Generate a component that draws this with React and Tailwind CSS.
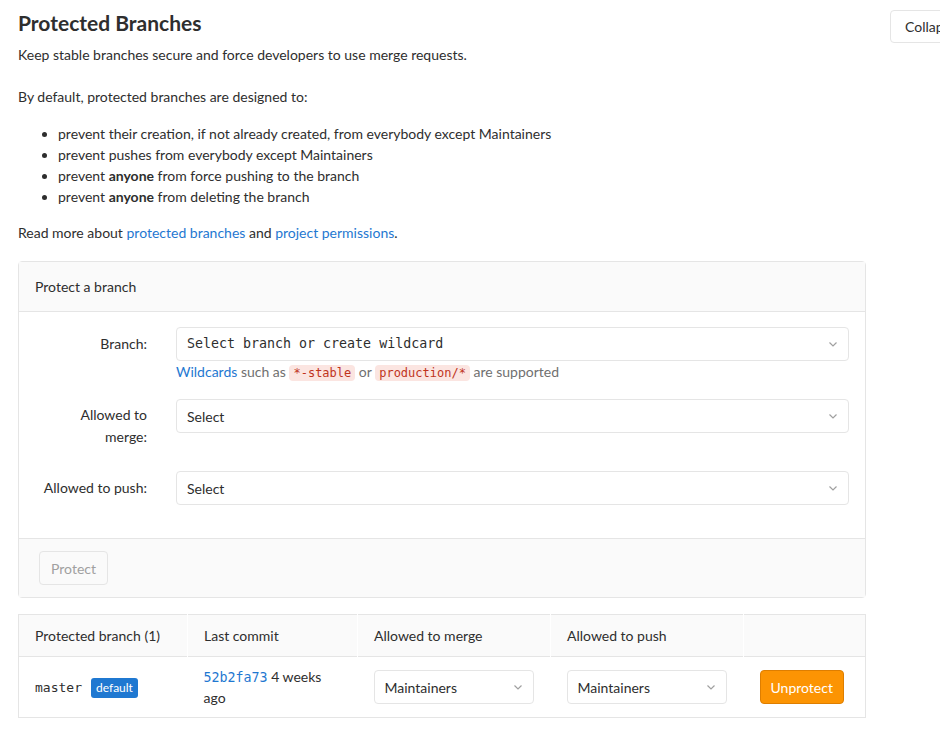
import React from 'react';

const sans = { fontFamily: 'Lato, "Noto Sans", sans-serif' };

function Chevron({ className = '' }) {
  return (
    <svg width="10" height="10" viewBox="0 0 10 10" className={className}>
      <path d="M1.5 3.5 L5 7 L8.5 3.5" fill="none" stroke="#a0a0a0" strokeWidth="1.2" />
    </svg>
  );
}

function SelectBox({ children, mono, className = '' }) {
  return (
    <div className={`flex items-center justify-between h-[34px] border border-[#e5e5e5] rounded bg-white pl-[10px] pr-[10px] ${className}`}>
      <span className={mono ? "font-['DejaVu_Sans_Mono',monospace] text-[13.3px] text-[#2e2e2e]" : 'text-[14px] text-[#2e2e2e]'}>{children}</span>
      <Chevron />
    </div>
  );
}

function Code({ children }) {
  return (
    <code className="font-['DejaVu_Sans_Mono',monospace] text-[12px] bg-[#fbe5e1] text-[#c0341d] rounded px-[4px] py-[1px]">{children}</code>
  );
}

export default function App() {
  return (
    <div className="relative bg-white text-[#2e2e2e] text-[14px] w-[940px] h-[730px] overflow-hidden" style={sans}>
      <button className="absolute left-[890px] top-[10px] h-[33px] px-[14px] border border-[#e5e5e5] rounded bg-white text-[14px] text-[#2e2e2e] whitespace-nowrap">
        Collapse
      </button>

      <div className="w-[848px] ml-[18px] pt-[10px]">
        <h4 className="text-[21px] font-bold leading-[26px]">Protected Branches</h4>
        <p className="mt-[9px] leading-[20px]">Keep stable branches secure and force developers to use merge requests.</p>
        <p className="mt-[22px] leading-[20px]">By default, protected branches are designed to:</p>
        <ul className="mt-[16px] pl-[40px] list-disc leading-[21px]">
          <li>prevent their creation, if not already created, from everybody except Maintainers</li>
          <li>prevent pushes from everybody except Maintainers</li>
          <li>prevent <strong>anyone</strong> from force pushing to the branch</li>
          <li>prevent <strong>anyone</strong> from deleting the branch</li>
        </ul>
        <p className="mt-[16px] leading-[20px]">
          Read more about <a className="text-[#1f78d1]">protected branches</a> and <a className="text-[#1f78d1]">project permissions</a>.
        </p>

        <div className="mt-[18px] border border-[#e5e5e5] rounded">
          <div className="h-[50px] bg-[#fafafa] border-b border-[#e5e5e5] flex items-center px-[16px]">Protect a branch</div>
          <div className="pt-[15px] pb-[33px]">
            <div className="flex h-[72px]">
              <label className="ml-[20px] w-[108px] text-right pt-[6px] leading-[22px]">Branch:</label>
              <div className="ml-[29px] w-[673px]">
                <SelectBox mono>Select branch or create wildcard</SelectBox>
                <p className="mt-[1px] text-[#707070] text-[14px] leading-[20px]">
                  <a className="text-[#1f78d1]">Wildcards</a> such as <Code>*-stable</Code> or <Code>production/*</Code> are supported
                </p>
              </div>
            </div>
            <div className="flex h-[72px]">
              <label className="ml-[20px] w-[108px] text-right pt-[5px] leading-[22px]">Allowed to merge:</label>
              <div className="ml-[29px] w-[673px]"><SelectBox>Select</SelectBox></div>
            </div>
            <div className="flex">
              <label className="ml-[20px] w-[108px] text-right pt-[6px] leading-[22px]">Allowed to push:</label>
              <div className="ml-[29px] w-[673px]"><SelectBox>Select</SelectBox></div>
            </div>
          </div>
          <div className="bg-[#fafafa] border-t border-[#e5e5e5] px-[20px] py-[12px]">
            <button className="h-[34px] px-[11px] border border-[#e5e5e5] rounded bg-[#fafafa] text-[#a0a0a0] text-[14px]" disabled>Protect</button>
          </div>
        </div>

        <table className="mt-[16px] w-full border border-[#e5e5e5] border-collapse table-fixed">
          <thead>
            <tr className="bg-[#fafafa] h-[42px] text-left border-b border-[#e5e5e5]">
              <th className="font-normal pl-[16px] w-[169px] border-r border-white">Protected branch (1)</th>
              <th className="font-normal pl-[16px] w-[170px] border-r border-white">Last commit</th>
              <th className="font-normal pl-[16px] w-[193px] border-r border-white">Allowed to merge</th>
              <th className="font-normal pl-[16px] w-[193px] border-r border-white">Allowed to push</th>
              <th></th>
            </tr>
          </thead>
          <tbody>
            <tr className="h-[61px]">
              <td className="pl-[16px]">
                <span className="font-['DejaVu_Sans_Mono',monospace] text-[13px]">master</span>
                <span className="ml-[9px] inline-block bg-[#1f78d1] text-white text-[12px] leading-[20px] px-[5px] rounded-[3px] align-middle">default</span>
              </td>
              <td className="pl-[16px] pr-[16px] leading-[20px]">
                <a className="text-[#1f78d1] font-['DejaVu_Sans_Mono',monospace] text-[13.3px]">52b2fa73</a> 4 weeks ago
              </td>
              <td className="pl-[16px]"><SelectBox className="w-[160px]">Maintainers</SelectBox></td>
              <td className="pl-[16px]"><SelectBox className="w-[160px]">Maintainers</SelectBox></td>
              <td className="pl-[16px]">
                <button className="h-[34px] px-[10px] bg-[#fc9403] border border-[#de7e00] rounded text-white text-[14px]">Unprotect</button>
              </td>
            </tr>
          </tbody>
        </table>
      </div>
    </div>
  );
}
